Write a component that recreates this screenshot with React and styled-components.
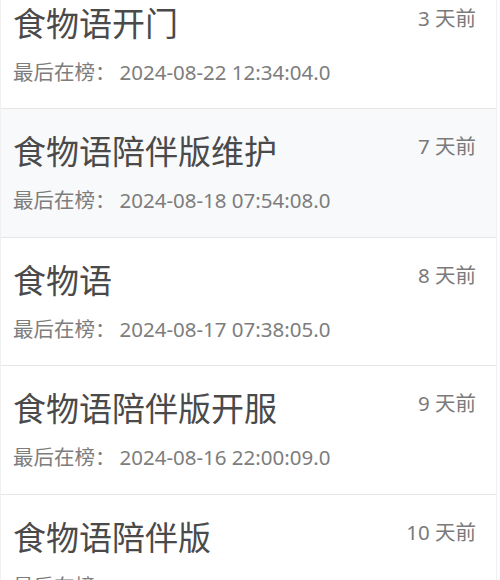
import React from 'react'
import styled, { createGlobalStyle } from 'styled-components'

const GlobalStyle = createGlobalStyle`
  html, body {
    margin: 0;
    padding: 0;
    background: #fff;
    overflow: hidden;
  }
  body {
    font-family: "Noto Sans", "Noto Sans CJK SC", sans-serif;
  }
`

const List = styled.div`
  margin-top: -19.5px;
  border-left: 1px solid #f0f0f0;
  border-right: 1px solid #f0f0f0;
  width: 497px;
  box-sizing: border-box;
`

const Item = styled.div`
  height: 128.5px;
  box-sizing: border-box;
  padding: 19px 20px 0 12px;
  border-bottom: 1px solid #e6e6e6;
  background: ${p => (p.active ? '#f8f9fa' : '#fff')};
`

const Head = styled.div`
  display: flex;
  justify-content: space-between;
  align-items: flex-start;
`

const Title = styled.div`
  font-family: "Noto Sans CJK SC", sans-serif;
  font-size: 33px;
  line-height: 44px;
  color: #4a4a4a;
`

const Ago = styled.div`
  margin-top: 4px;
  font-size: 20.5px;
  line-height: 28px;
  color: #7a7a7a;
  white-space: nowrap;
`

const Sub = styled.div`
  margin-top: 13px;
  font-size: 20.5px;
  line-height: 30px;
  color: #7d7d7d;
`

const Colon = styled.span`
  margin-right: 4px;
`

const rows = [
  { title: '食物语开门', ago: '3 天前', time: '2024-08-22 12:34:04.0' },
  { title: '食物语陪伴版维护', ago: '7 天前', time: '2024-08-18 07:54:08.0', active: true },
  { title: '食物语', ago: '8 天前', time: '2024-08-17 07:38:05.0' },
  { title: '食物语陪伴版开服', ago: '9 天前', time: '2024-08-16 22:00:09.0' },
  { title: '食物语陪伴版', ago: '10 天前', time: '2024-08-15 17:49:07.0' },
]

export default function App() {
  return (
    <>
      <GlobalStyle />
      <List>
        {rows.map(r => (
          <Item key={r.title} active={r.active}>
            <Head>
              <Title>{r.title}</Title>
              <Ago>{r.ago}</Ago>
            </Head>
            <Sub>最后在榜<Colon>：</Colon>{r.time}</Sub>
          </Item>
        ))}
      </List>
    </>
  )
}
